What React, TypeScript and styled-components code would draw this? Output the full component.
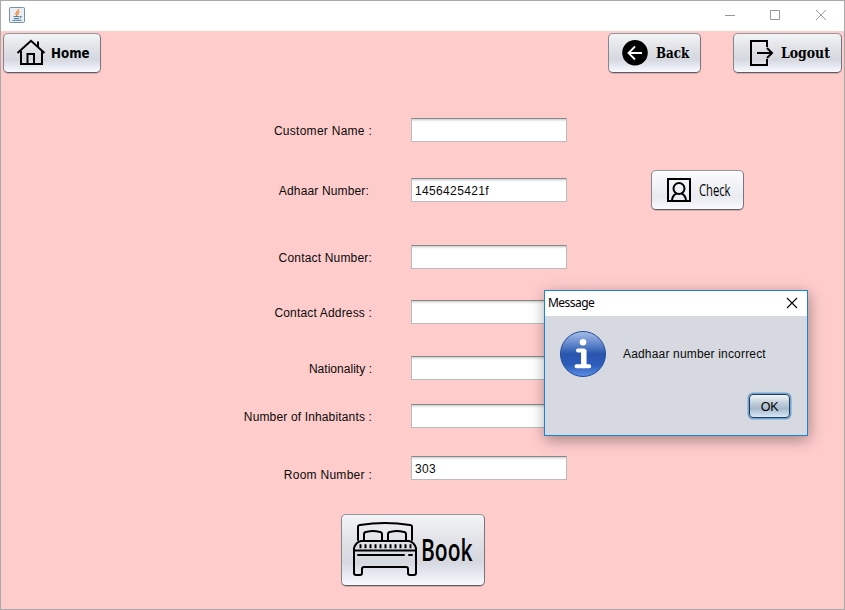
import React from "react";
import styled, { createGlobalStyle } from "styled-components";

const GlobalStyle = createGlobalStyle`
  * { box-sizing: border-box; }
  body { margin: 0; background: #fff; }
  svg { flex: none; display: block; }
`;

const Window = styled.div`
  position: relative;
  width: 845px;
  height: 610px;
  border: 1px solid #a9a9a9;
  background: #ffcccc;
  font: 12px/16px "Liberation Sans", Arial, sans-serif;
  color: #0a0a0a;
  overflow: hidden;
`;

const TitleBar = styled.header`
  height: 30px;
  background: #fff;
  display: flex;
  align-items: center;
  justify-content: space-between;
  padding: 0 17px 2px 8px;
`;

const Controls = styled.div`
  display: flex;
  gap: 34px;
`;

const Toolbar = styled.nav`
  display: flex;
  padding: 2px 2px 0;
  height: 87px;
`;

const Spacer = styled.div<{ $w?: number }>`
  ${(p) => (p.$w ? `width: ${p.$w}px; flex: none;` : "flex: 1;")}
`;

const Button = styled.button<{ $w: number; $h: number; $pad: number; $bright?: boolean }>`
  flex: none;
  width: ${(p) => p.$w}px;
  height: ${(p) => p.$h}px;
  padding: 0 0 0 ${(p) => p.$pad}px;
  display: flex;
  align-items: center;
  border: 1px solid;
  border-color: #94979c #73767c #5a5e66 #83868c;
  border-radius: 5px;
  color: #000;
  background: ${(p) =>
    p.$bright
      ? "linear-gradient(#fbfbfc 0%, #f0f1f5 45%, #e9ebf1 70%, #fafbff 100%)"
      : "linear-gradient(#f3f4f6 0%, #dfe1e6 40%, #d5d8df 68%, #e4e7ef 82%, #f8faff 100%)"};
  box-shadow: 0 1px 0 rgba(120, 90, 95, 0.3);
`;

const Caption = styled.span<{ $size: number; $sx: number; $gap: number; $face: string; $weight: number }>`
  margin-left: ${(p) => p.$gap}px;
  font: ${(p) => p.$weight} ${(p) => p.$size}px/1 ${(p) => p.$face};
  white-space: nowrap;
  flex: none;
  transform: scaleX(${(p) => p.$sx});
  transform-origin: left center;
`;

const Form = styled.main`
  display: flex;
  flex-direction: column;
`;

const Row = styled.div<{ $gap: number }>`
  display: flex;
  align-items: center;
  height: 24px;
  margin-bottom: ${(p) => p.$gap}px;
`;

const Label = styled.label<{ $end: number; $drop?: number; $track: number }>`
  width: 410px;
  padding-right: ${(p) => p.$end}px;
  padding-top: ${(p) => (p.$drop || 0) * 2 + 1}px;
  text-align: right;
  white-space: nowrap;
  letter-spacing: ${(p) => p.$track}px;
`;

const Field = styled.input`
  width: 156px;
  height: 24px;
  padding: 1px 3px 0;
  border: 1px solid #b9bbbd;
  border-top-color: #868789;
  border-radius: 0;
  outline: none;
  font: inherit;
  letter-spacing: 0.35px;
  color: #0a0a0a;
  background: linear-gradient(#cfd0d1 0, #f2f2f2 2px, #fff 3px);
`;

const BookLine = styled.div`
  padding-left: 340px;
`;

const Dialog = styled.section`
  position: absolute;
  left: 543px;
  top: 289px;
  width: 264px;
  height: 146px;
  border: 1px solid #1983d8;
  background: #d6d9e0;
  box-shadow: 1px 4px 14px rgba(0, 0, 0, 0.36);
`;

const DialogTitle = styled.div`
  height: 25px;
  display: flex;
  justify-content: space-between;
  align-items: center;
  padding: 0 9px 1px 3px;
  background: #fff;
  color: #000;
  font: 12px/16px "Noto Sans", sans-serif;
`;

const TitleText = styled.span`
  letter-spacing: -0.55px;
`;

const DialogBody = styled.div`
  display: flex;
  align-items: center;
  gap: 16px;
  padding: 14px 0 0 14px;
`;

const Message = styled.span`
  letter-spacing: 0.17px;
`;

const OkButton = styled.button`
  display: block;
  width: 41px;
  height: 24px;
  margin: 16px 0 0 204px;
  padding: 1px 0 0;
  border: 1px solid #1e3d5e;
  border-radius: 4px;
  background: linear-gradient(#f3f6f9 0%, #c3cfdb 35%, #a7b9ca 62%, #c9dcee 90%, #d8eaf8 100%);
  box-shadow: 0 0 0 1.5px #73a4d1;
  font: 12.5px/16px "Liberation Sans", Arial, sans-serif;
  letter-spacing: -0.3px;
  color: #000;
`;

const JavaIcon = () => (
  <svg width="17" height="17" viewBox="0 0 17 17" fill="none">
    <rect x=".5" y=".5" width="15" height="15" rx="1" fill="#e9eff4" stroke="#7890a4" />
    <path d="M9.500 2C10 4 6 5 7 7.500l1.200 1.300M10.500 4.500C8 6 9 7 9 8" stroke="#ee7c2b" strokeWidth="1.200" />
    <path d="M4.500 9.500h6M5 11.500h5M3.500 13.300h9M11 9.500c2-.8 2 1-.2 1.700" stroke="#4f7ca0" />
  </svg>
);

const HomeIcon = () => (
  <svg width="30" height="28" viewBox="0 0 30 28" fill="none" stroke="#000" strokeWidth="2">
    <path d="M1.500 14 15 1.800l13.500 12.200M5 12v13h21V12M22 8V2.500M11.500 25V15h6.500V25" />
  </svg>
);

const BackIcon = () => (
  <svg width="26" height="26" viewBox="0 0 26 26" fill="none">
    <circle cx="13" cy="12.800" r="12.800" fill="#000" />
    <path d="M20 13H7M13 6.500 6.500 13l6.500 6.500" stroke="#fff" strokeWidth="1.800" />
  </svg>
);

const LogoutIcon = () => (
  <svg width="24" height="26" viewBox="0 0 24 26" fill="none" stroke="#000" strokeWidth="2">
    <path d="M17 7V1H1v24h16v-6" />
    <path d="M7 13h15M17 8l5 5-5 5" />
  </svg>
);

const PersonIcon = () => (
  <svg width="24" height="24" viewBox="0 0 24 24" fill="none" stroke="#000" strokeWidth="2">
    <path d="M1 1h22v22H1z" />
    <circle cx="12" cy="10.500" r="5.500" />
    <path d="M5 22.500c.2-3.500 2-6 4.700-7.200M19 22.500c-.2-3.500-2-6-4.700-7.200" />
  </svg>
);

const BedIcon = () => (
  <svg width="64" height="56" viewBox="0 0 64 56" fill="none" stroke="#000" strokeWidth="2" strokeLinecap="round" strokeLinejoin="round">
    <path d="M5 18V4.500Q5 3.200 7 2.900 32-.7 57 2.900 59 3.200 59 4.500V18" />
    <path d="M11 18v-6q0-2 3-2.300 6-1.200 12 0 3 .3 3 2.300V18M35 18v-6q0-2 3-2.300 6-1.200 12 0 3 .3 3 2.300V18" />
    <path d="M8 19h48q5 1 7 7v25q0 2-2 2h-4q-2 0-2-2v-4q0-2-2-2H11q-2 0-2 2v4q0 2-2 2H3q-2 0-2-2V26q2-6 7-7z" />
    <path d="M1 28.500h62M5 33h46M56 33h3" />
    <path d="M6.500 24.300h52" strokeWidth="4" strokeLinecap="butt" strokeDasharray="2 3" />
  </svg>
);

const InfoIcon = () => (
  <svg width="48" height="48" viewBox="0 0 48 48">
    <defs>
      <linearGradient id="ball" x1="0" x2="0" y1="0" y2="1">
        <stop offset="0" stopColor="#a9bfe9" />
        <stop offset=".35" stopColor="#4e78c4" />
        <stop offset=".5" stopColor="#2855ad" />
        <stop offset=".75" stopColor="#2d5dbb" />
        <stop offset="1" stopColor="#5c8fe8" />
      </linearGradient>
    </defs>
    <circle cx="24" cy="24" r="22.500" fill="url(#ball)" stroke="#234b98" />
    <circle cx="24" cy="12.200" r="3.300" fill="#fff" />
    <path d="M19 20.500h6v16M17.500 36.300h12.700" fill="none" stroke="#fff" strokeWidth="4" strokeLinecap="round" strokeLinejoin="round" />
    <path d="M24.800 20v16" stroke="#fff" strokeWidth="5.500" />
  </svg>
);

const fancy = '"DejaVu Serif", serif';
const narrow = '"Open Sans", sans-serif';

const rows = [
  { label: "Customer Name :", value: "", gap: 36, end: 39, track: 0.27 },
  { label: "Adhaar Number:", value: "1456425421f", gap: 43, end: 42, track: 0.15 },
  { label: "Contact Number:", value: "", gap: 31, end: 39, track: 0.18 },
  { label: "Contact Address :", value: "", gap: 32, end: 39, track: 0.17 },
  { label: "Nationality :", value: "", gap: 24, end: 39, track: 0.03 },
  { label: "Number of Inhabitants :", value: "", gap: 28, end: 39, track: 0.15 },
  { label: "Room Number :", value: "303", gap: 34, end: 39, track: 0.27, drop: 6 },
];

export default function App() {
  return (
    <>
      <GlobalStyle />
      <Window>
        <TitleBar>
          <JavaIcon />
          <Controls>
            <svg width="12" height="12" fill="none" stroke="#999"><path d="M2 6.500h10" /></svg>
            <svg width="12" height="12" fill="none" stroke="#999"><path d="M1.500 1.500h9v9h-9z" /></svg>
            <svg width="12" height="12" fill="none" stroke="#999"><path d="m1 1 10 10M11 1 1 11" /></svg>
          </Controls>
        </TitleBar>
        <Toolbar>
          <Button $w={98} $h={40} $pad={12}>
            <HomeIcon />
            <Caption $size={14} $sx={0.85} $gap={5} $face={'"DejaVu Sans", sans-serif'} $weight={700}>Home</Caption>
          </Button>
          <Spacer />
          <Button $w={93} $h={40} $pad={13}>
            <BackIcon />
            <Caption $size={14} $sx={0.85} $gap={8} $face={fancy} $weight={700}>Back</Caption>
          </Button>
          <Spacer $w={32} />
          <Button $w={109} $h={40} $pad={16}>
            <LogoutIcon />
            <Caption $size={14} $sx={0.89} $gap={7} $face={fancy} $weight={700}>Logout</Caption>
          </Button>
        </Toolbar>
        <Form>
          {rows.map((r) => (
            <Row key={r.label} $gap={r.gap}>
              <Label $end={r.end} $drop={r.drop} $track={r.track}>{r.label}</Label>
              <Field defaultValue={r.value} />
              {r.label === "Adhaar Number:" && (
                <>
                  <Spacer $w={84} />
                  <Button $w={93} $h={40} $pad={15} $bright>
                    <PersonIcon />
                    <Caption $size={16} $sx={0.7} $gap={8} $face={narrow} $weight={500}>Check</Caption>
                  </Button>
                </>
              )}
            </Row>
          ))}
          <BookLine>
            <Button $w={144} $h={72} $pad={11}>
              <BedIcon />
              <Caption $size={30} $sx={0.7} $gap={4} $face={narrow} $weight={600}>Book</Caption>
            </Button>
          </BookLine>
        </Form>
        <Dialog>
          <DialogTitle>
            <TitleText>Message</TitleText>
            <svg width="12" height="12" fill="none" stroke="#000" strokeWidth="1.100"><path d="m1 1 10 10M11 1 1 11" /></svg>
          </DialogTitle>
          <DialogBody>
            <InfoIcon />
            <Message>Aadhaar number incorrect</Message>
          </DialogBody>
          <OkButton>OK</OkButton>
        </Dialog>
      </Window>
    </>
  );
}
